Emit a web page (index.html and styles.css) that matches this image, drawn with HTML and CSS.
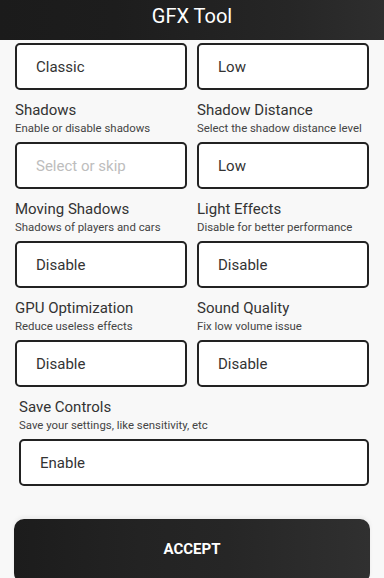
FILE: index.html
```html
<!DOCTYPE html>
<html lang="en">

<head>
    <meta charset="UTF-8">
    <meta name="viewport" content="width=device-width, initial-scale=1.0">
    <title>GFX Tool</title>
    <link rel="stylesheet" href="styles.css">
</head>

<body>
    <header class="topbar">
        <h1>GFX Tool</h1>
    </header>
    <section class="settings">
        <div class="option first">
            <div class="select">Classic</div>
        </div>
        <div class="option first">
            <div class="select">Low</div>
        </div>
        <div class="option">
            <h2>Shadows</h2>
            <p>Enable or disable shadows</p>
            <div class="select empty">Select or skip</div>
        </div>
        <div class="option">
            <h2>Shadow Distance</h2>
            <p>Select the shadow distance level</p>
            <div class="select">Low</div>
        </div>
        <div class="option">
            <h2>Moving Shadows</h2>
            <p>Shadows of players and cars</p>
            <div class="select">Disable</div>
        </div>
        <div class="option">
            <h2>Light Effects</h2>
            <p>Disable for better performance</p>
            <div class="select">Disable</div>
        </div>
        <div class="option">
            <h2>GPU Optimization</h2>
            <p>Reduce useless effects</p>
            <div class="select">Disable</div>
        </div>
        <div class="option">
            <h2>Sound Quality</h2>
            <p>Fix low volume issue</p>
            <div class="select">Disable</div>
        </div>
        <div class="option wide">
            <h2>Save Controls</h2>
            <p>Save your settings, like sensitivity, etc</p>
            <div class="select">Enable</div>
        </div>
    </section>
    <div class="actions">
        <button class="acceptBtn">ACCEPT</button>
    </div>
</body>

</html>
```

FILE: styles.css
```css
* {
    margin: 0;
    padding: 0;
    box-sizing: border-box;
}

body {
    background: #f8f8f8;
    font-family: Roboto, "Noto Sans", sans-serif;
    color: #333;
    height: 578px;
    overflow: hidden;
}

.topbar {
    height: 40px;
    background: linear-gradient(90deg, #1b1b1b 0%, #1d1d1d 30%, #222 55%, #262626 75%, #2e2e2e 100%);
    display: flex;
    justify-content: center;
    align-items: flex-start;
}

.topbar h1 {
    color: #fff;
    font-size: 20px;
    font-weight: 400;
    line-height: 32px;
}

.settings {
    display: grid;
    grid-template-columns: 1fr 1fr;
    column-gap: 10px;
    padding: 3px 15px 0 15px;
}

.option {
    padding-top: 11px;
}

.option.first {
    padding-top: 0;
}

.option h2 {
    font-size: 15px;
    font-weight: 400;
    line-height: 18px;
    color: #333;
}

.option p {
    font-size: 11.4px;
    line-height: 14px;
    margin-top: 2px;
    color: #444;
}

.option .select {
    height: 47px;
    border: 2px solid #222;
    border-radius: 5px;
    background: #fff;
    padding-left: 19px;
    display: flex;
    align-items: center;
    font-size: 15px;
    color: #333;
}

.option p + .select {
    margin-top: 7px;
}

.select.empty {
    color: #bdbdbd;
}

.wide {
    grid-column: 1 / 3;
    padding-left: 4px;
}

.actions {
    padding: 33px 14px 0 14px;
}

.acceptBtn {
    width: 100%;
    height: 64px;
    border: none;
    border-radius: 10px;
    background: linear-gradient(90deg, #1c1c1c 0%, #232323 35%, #262626 60%, #303030 100%);
    box-shadow: 0 -2px 4px rgba(0, 0, 0, 0.06);
    color: #fff;
    font-family: Roboto, "Noto Sans", sans-serif;
    font-size: 15px;
    font-weight: 700;
    padding-bottom: 4px;
}
```
